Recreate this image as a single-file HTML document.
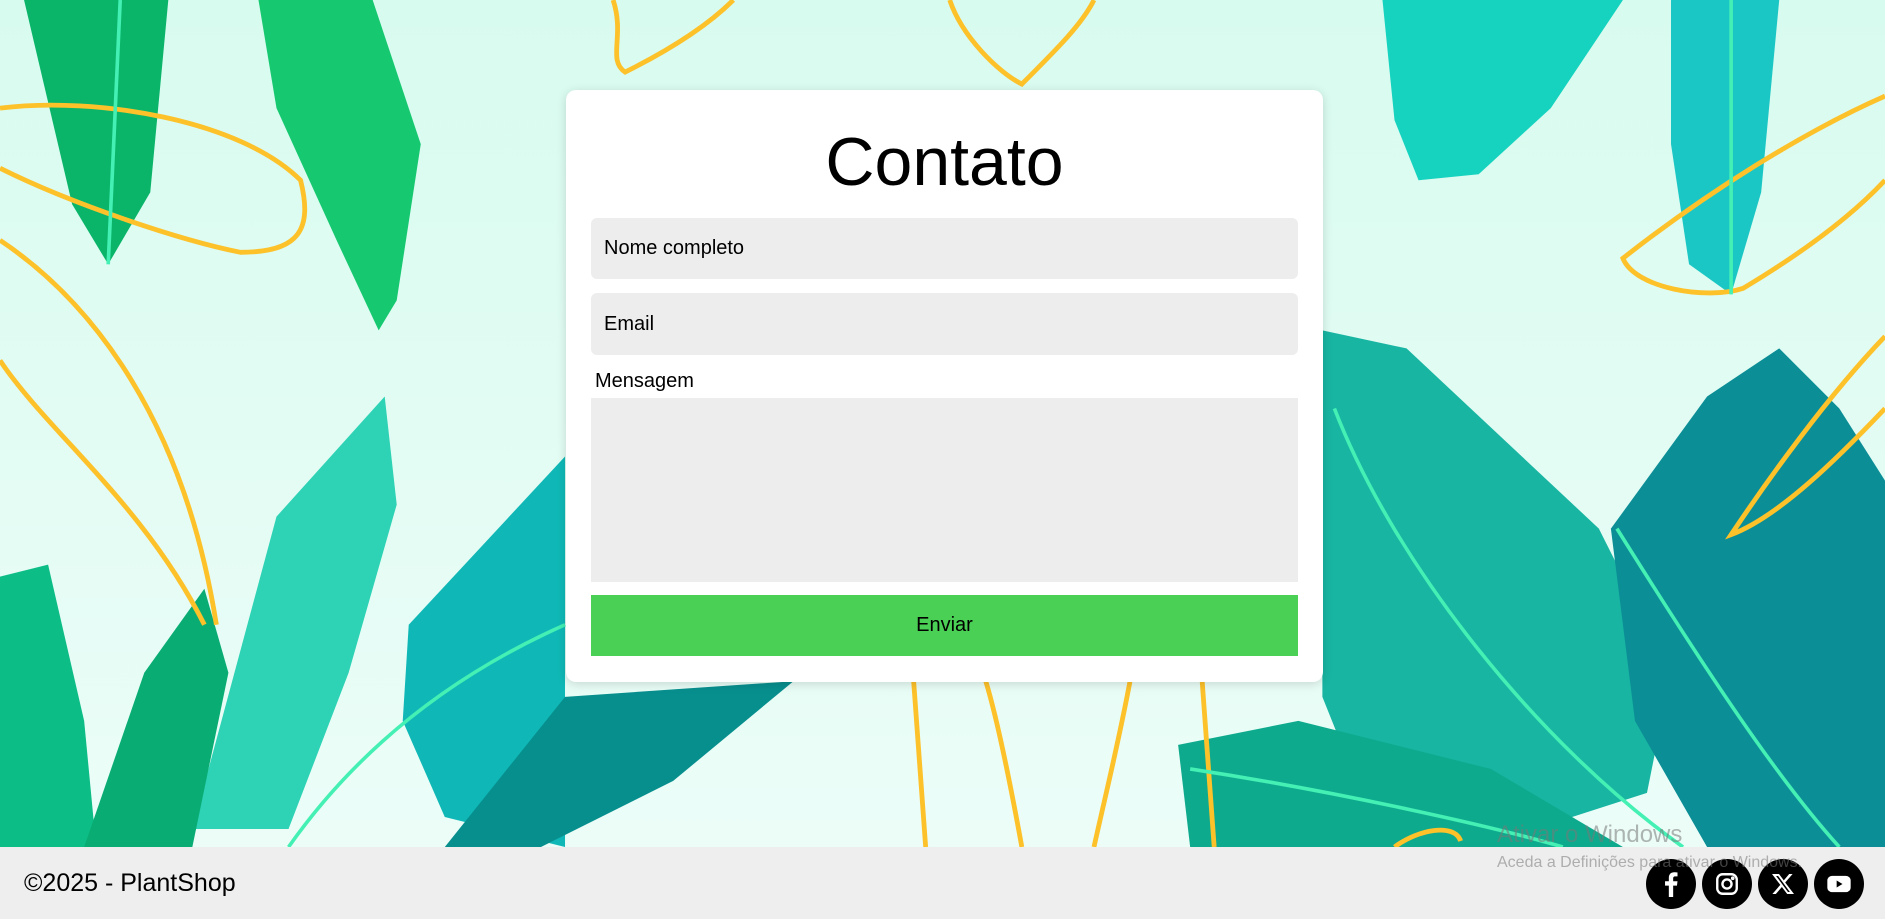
<!DOCTYPE html>
<html><head><meta charset="utf-8"><style>
*{box-sizing:border-box;margin:0;padding:0}
body{width:1885px;height:919px;overflow:hidden;font-family:"Liberation Sans",sans-serif;background:#e0fbf3;position:relative}
#bg{position:absolute;left:0;top:0;width:1885px;height:847px}
.card{position:absolute;left:566px;top:90px;width:757px;height:592px;background:#fff;border-radius:10px;box-shadow:0 2px 10px rgba(0,0,0,.15)}
h1{position:absolute;left:0;right:0;top:33px;text-align:center;font-weight:400;font-size:68px;color:#000}
.inp{position:absolute;left:25px;width:707px;background:#ededed;border-radius:6px;font-size:20px;color:#000;padding-left:13px;display:flex;align-items:center}
.lbl{position:absolute;left:29px;top:280px;font-size:20px}
.ta{position:absolute;left:25px;top:308px;width:707px;height:184px;background:#ededed}
.btn{position:absolute;left:25px;top:505px;width:707px;height:61px;background:#4ad054;font-size:20px;display:flex;align-items:center;justify-content:center}
footer{position:absolute;left:0;top:847px;width:1885px;height:72px;background:#eeeeee}
.copy{position:absolute;left:24px;top:22px;font-size:25px}
.ic{position:absolute;top:12px;width:50px;height:50px;border-radius:50%;background:#000;display:flex;align-items:center;justify-content:center}
.wm1{position:absolute;left:1497px;top:821px;font-size:24px;color:rgba(120,120,120,.55)}
.wm2{position:absolute;left:1497px;top:854px;font-size:16px;color:rgba(120,120,120,.55)}
</style></head><body>
<svg id="bg" viewBox="0 0 1568 705" preserveAspectRatio="none">
<defs><linearGradient id="g" x1="0" y1="0" x2="0" y2="1"><stop offset="0" stop-color="#d8fbef"/><stop offset="1" stop-color="#ecfdf8"/></linearGradient></defs>
<rect width="1568" height="705" fill="url(#g)"/>
<g fill="#0ab56a"><path d="M20 0 L140 0 L125 160 L90 220 L60 170 Z"/><path d="M215 0 L310 0 L350 120 L330 250 L315 275 L280 200 L230 90 Z" fill="#16c970"/></g>
<g fill="#12c9a6"><path d="M160 690 L230 430 L320 330 L330 420 L290 560 L240 690 Z" fill="#2dd3b4"/><path d="M0 480 L40 470 L70 600 L80 705 L0 705 Z" fill="#0dbd86"/><path d="M70 705 L120 560 L170 490 L190 560 L160 705 Z" fill="#09ad74"/>
<path d="M340 520 L470 380 L470 705 L370 680 L335 600 Z" fill="#0fb8b6"/><path d="M370 705 L470 580 L660 567 L560 650 L450 705 Z" fill="#078f8e"/>
<path d="M1100 275 L1170 290 L1330 440 L1390 560 L1370 660 L1230 705 L1150 705 L1100 580 Z" fill="#18b5a2"/>
<path d="M980 620 L1080 600 L1240 640 L1350 705 L990 705 Z" fill="#0eaa8d"/>
<path d="M1340 440 L1420 330 L1480 290 L1530 340 L1568 400 L1568 705 L1420 705 L1360 600 Z" fill="#0b8e96"/>
<path d="M1150 0 L1350 0 L1290 90 L1230 145 L1180 150 L1160 100 Z" fill="#15d3bf"/><path d="M1390 0 L1480 0 L1465 160 L1440 245 L1405 220 L1390 120 Z" fill="#1bc7c5"/></g>
<g fill="none" stroke="#fdc12a" stroke-width="4"><path d="M0 90 C80 80 200 100 250 150 C260 190 250 210 200 210 C150 200 60 170 0 140"/><path d="M0 200 C60 240 150 330 180 520"/><path d="M0 300 C40 360 120 420 170 520"/><path d="M510 0 C520 30 505 50 520 60 C560 40 590 20 610 0"/><path d="M790 0 C800 30 830 60 850 70 C880 40 900 20 910 0"/><path d="M760 567 L770 705 M820 567 C830 600 840 650 850 705 M940 567 C930 620 920 660 910 705 M1000 567 L1010 705"/><path d="M1568 80 C1500 110 1420 160 1350 215 C1360 240 1420 250 1450 240 C1500 210 1540 180 1568 150"/><path d="M1568 280 C1520 330 1470 400 1440 445 C1480 430 1530 380 1568 340"/><path d="M1160 705 C1180 690 1210 685 1215 700"/></g>
<g fill="none" stroke="#44f0b4" stroke-width="3"><path d="M240 705 C300 620 380 560 470 520"/><path d="M100 0 L90 220"/><path d="M1110 340 C1160 470 1280 620 1400 705"/><path d="M990 640 C1120 660 1250 690 1300 705"/><path d="M1345 440 C1420 560 1480 650 1530 705"/><path d="M1440 0 L1440 245"/></g>
</svg>
<div class="card">
<h1>Contato</h1>
<div class="inp" style="top:128px;height:61px">Nome completo</div>
<div class="inp" style="top:203px;height:62px">Email</div>
<div class="lbl">Mensagem</div>
<div class="ta"></div>
<div class="btn">Enviar</div>
</div>
<div class="wm1">Ativar o Windows</div>
<footer>
<div class="copy">©2025 - PlantShop</div>
<div class="ic" style="left:1646px"><svg width="26" height="26" viewBox="0 0 24 24"><path fill="#fff" d="M14 24V13.5h3.5l.5-4h-4V7c0-1.2.4-2 2-2h2V1.4C17.6 1.3 16.4 1.2 15 1.2c-3 0-5 1.8-5 5.1v3.2H6.5v4H10V24z"/></svg></div>
<div class="ic" style="left:1702px"><svg width="26" height="26" viewBox="0 0 24 24" fill="none" stroke="#fff" stroke-width="2.2"><rect x="3" y="3" width="18" height="18" rx="5"/><circle cx="12" cy="12" r="4.2"/><circle cx="17.3" cy="6.7" r=".6" fill="#fff"/></svg></div>
<div class="ic" style="left:1758px"><svg width="24" height="24" viewBox="0 0 24 24"><path fill="#fff" d="M18.2 2h3.4l-7.4 8.5L23 22h-6.8l-5.3-7-6.1 7H1.4l7.9-9.1L1 2h7l4.8 6.4zm-1.2 18h1.9L7.1 4H5.1z"/></svg></div>
<div class="ic" style="left:1814px"><svg width="28" height="28" viewBox="0 0 24 24"><rect x="2" y="5" width="20" height="14" rx="4" fill="#fff"/><path d="M10 9l5 3-5 3z" fill="#000"/></svg></div>
</footer>
<div class="wm2">Aceda a Definições para ativar o Windows.</div>
</body></html>
